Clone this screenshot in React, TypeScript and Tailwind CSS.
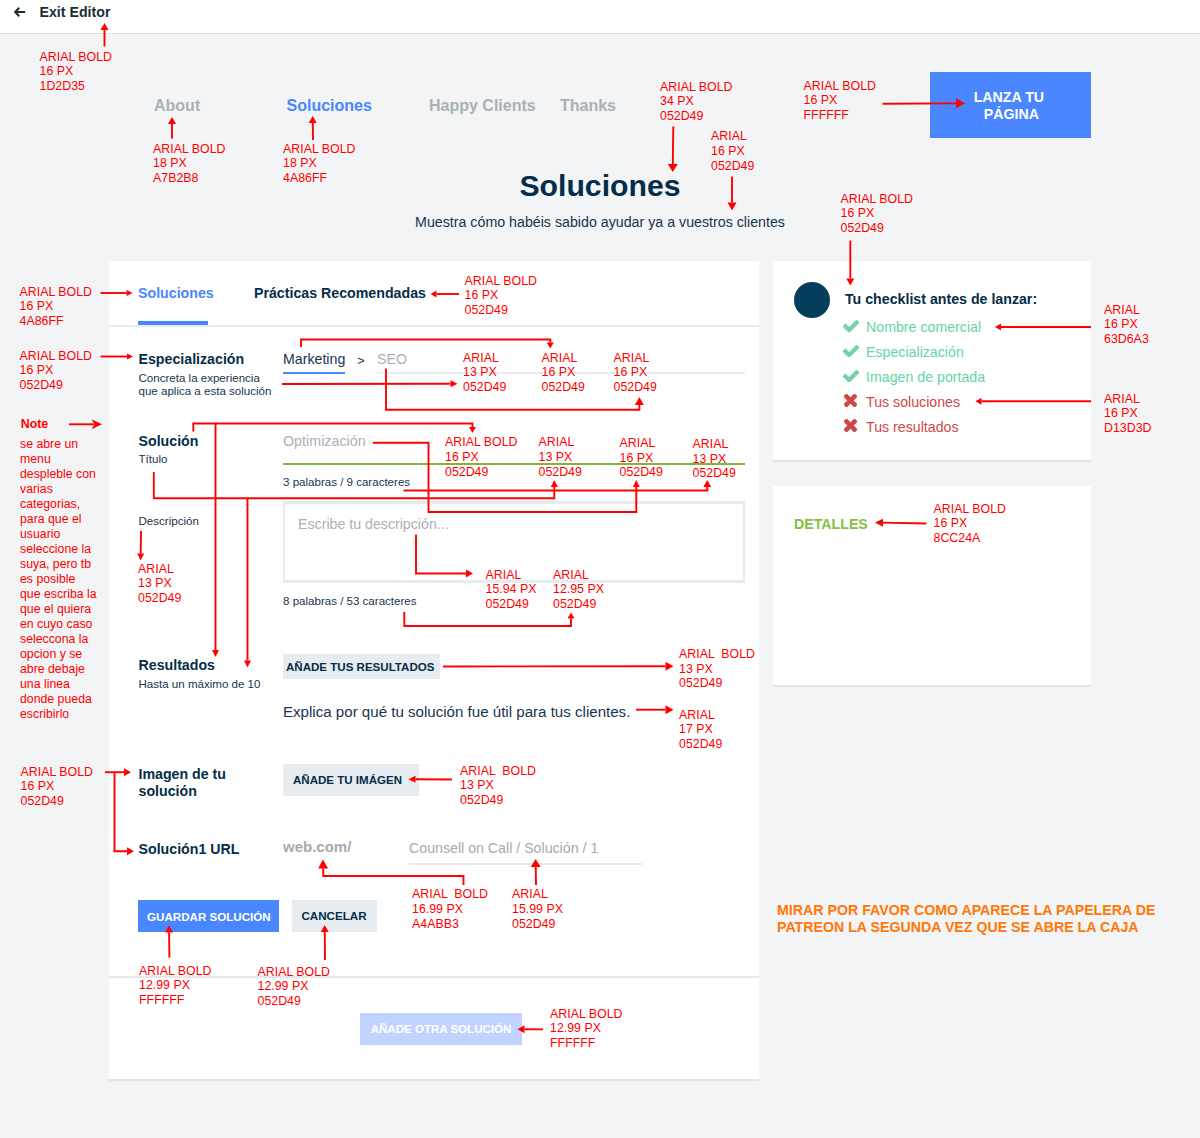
import React from "react";

type Point = [number, number];

const specs: { x: number; y: number; lines: [string, string, string] }[] = [
  { x: 39.5, y: 57, lines: ["ARIAL BOLD", "16 PX", "1D2D35"] },
  { x: 153, y: 149, lines: ["ARIAL BOLD", "18 PX", "A7B2B8"] },
  { x: 283, y: 149, lines: ["ARIAL BOLD", "18 PX", "4A86FF"] },
  { x: 660, y: 86.8, lines: ["ARIAL BOLD", "34 PX", "052D49"] },
  { x: 711, y: 136.5, lines: ["ARIAL", "16 PX", "052D49"] },
  { x: 803.5, y: 86, lines: ["ARIAL BOLD", "16 PX", "FFFFFF"] },
  { x: 840.5, y: 199, lines: ["ARIAL BOLD", "16 PX", "052D49"] },
  { x: 1104, y: 310, lines: ["ARIAL", "16 PX", "63D6A3"] },
  { x: 1104, y: 399, lines: ["ARIAL", "16 PX", "D13D3D"] },
  { x: 19.5, y: 292, lines: ["ARIAL BOLD", "16 PX", "4A86FF"] },
  { x: 19.5, y: 356, lines: ["ARIAL BOLD", "16 PX", "052D49"] },
  { x: 464.5, y: 281, lines: ["ARIAL BOLD", "16 PX", "052D49"] },
  { x: 463, y: 358, lines: ["ARIAL", "13 PX", "052D49"] },
  { x: 541.5, y: 358, lines: ["ARIAL", "16 PX", "052D49"] },
  { x: 613.5, y: 358, lines: ["ARIAL", "16 PX", "052D49"] },
  { x: 445, y: 442.5, lines: ["ARIAL BOLD", "16 PX", "052D49"] },
  { x: 538.5, y: 442.5, lines: ["ARIAL", "13 PX", "052D49"] },
  { x: 619.5, y: 443.3, lines: ["ARIAL", "16 PX", "052D49"] },
  { x: 692.5, y: 444.3, lines: ["ARIAL", "13 PX", "052D49"] },
  { x: 138, y: 569, lines: ["ARIAL", "13 PX", "052D49"] },
  { x: 485.5, y: 575, lines: ["ARIAL", "15.94 PX", "052D49"] },
  { x: 553, y: 575, lines: ["ARIAL", "12.95 PX", "052D49"] },
  { x: 679, y: 654.3, lines: ["ARIAL  BOLD", "13 PX", "052D49"] },
  { x: 679, y: 715, lines: ["ARIAL", "17 PX", "052D49"] },
  { x: 20.5, y: 772, lines: ["ARIAL BOLD", "16 PX", "052D49"] },
  { x: 460, y: 771, lines: ["ARIAL  BOLD", "13 PX", "052D49"] },
  { x: 412, y: 894.5, lines: ["ARIAL  BOLD", "16.99 PX", "A4ABB3"] },
  { x: 512, y: 894.5, lines: ["ARIAL", "15.99 PX", "052D49"] },
  { x: 139, y: 971, lines: ["ARIAL BOLD", "12.99 PX", "FFFFFF"] },
  { x: 257.5, y: 972, lines: ["ARIAL BOLD", "12.99 PX", "052D49"] },
  { x: 550, y: 1014, lines: ["ARIAL BOLD", "12.99 PX", "FFFFFF"] },
  { x: 933.5, y: 509, lines: ["ARIAL BOLD", "16 PX", "8CC24A"] },
];

/* Each connector is a polyline whose arrowhead sits on the last point. */
const connectors: { pts: Point[]; w: number; l: number }[] = [
  { pts: [[104.5, 46.5], [104.5, 23]], w: 8, l: 7 },
  { pts: [[172, 138.5], [172, 117]], w: 8, l: 7 },
  { pts: [[313, 140], [312.7, 116]], w: 8, l: 7 },
  { pts: [[673.3, 126.5], [672.7, 172]], w: 10, l: 8 },
  { pts: [[732, 176.5], [732, 210.5]], w: 9, l: 8 },
  { pts: [[882.5, 103.8], [965, 103.3]], w: 10, l: 9 },
  { pts: [[850.3, 240.5], [850.3, 285.5]], w: 8, l: 7 },
  { pts: [[1091, 327], [995, 327]], w: 7, l: 6 },
  { pts: [[1091, 401.3], [975.5, 401.3]], w: 7, l: 6 },
  { pts: [[100.5, 293], [132.5, 293]], w: 6, l: 6 },
  { pts: [[100.5, 356.5], [133, 356.5]], w: 6, l: 6 },
  { pts: [[459, 294], [430.5, 294]], w: 7, l: 6 },
  { pts: [[301, 347], [301, 339.5], [550.3, 339.5], [550.3, 348.5]], w: 7, l: 6 },
  { pts: [[282, 384], [457.5, 383.8]], w: 7, l: 7 },
  { pts: [[386, 368.5], [386, 409.7], [639.4, 409.7], [639.4, 397]], w: 9, l: 8 },
  { pts: [[193.3, 431.5], [193.3, 423.5], [472.5, 423.5], [472.5, 433]], w: 7, l: 6 },
  { pts: [[215.5, 423], [215.5, 657]], w: 7, l: 7 },
  { pts: [[153.8, 472], [153.8, 498.3], [554.3, 498.3], [554.3, 480]], w: 7, l: 7 },
  { pts: [[247.5, 498], [247.5, 667.5]], w: 7, l: 7 },
  { pts: [[373, 442.7], [428.5, 442.7], [428.5, 512], [636.3, 512], [636.3, 480]], w: 7, l: 7 },
  { pts: [[403.5, 490.5], [707.3, 490.5], [707.3, 480]], w: 8, l: 7 },
  { pts: [[141, 531], [140.6, 560.5]], w: 7, l: 7 },
  { pts: [[416, 534.5], [416, 573.5], [473, 573.5]], w: 8, l: 7 },
  { pts: [[404.3, 612], [404.3, 626], [571, 626], [571, 612.5]], w: 7, l: 6 },
  { pts: [[443, 666.5], [673.5, 666.2]], w: 9, l: 8 },
  { pts: [[636, 709.7], [673.5, 709.7]], w: 9, l: 8 },
  { pts: [[105, 772.2], [131, 772.2]], w: 8, l: 7 },
  { pts: [[114.5, 772], [114.5, 851.3], [134, 851.3]], w: 8, l: 7 },
  { pts: [[452, 779.5], [408.5, 779.2]], w: 7, l: 7 },
  { pts: [[463.5, 885], [463.5, 876], [323.3, 876], [323, 859.5]], w: 10, l: 9 },
  { pts: [[536, 885], [535.6, 859]], w: 10, l: 8 },
  { pts: [[169.4, 957.5], [169, 925.5]], w: 8, l: 7 },
  { pts: [[325, 960], [324.7, 925]], w: 8, l: 7 },
  { pts: [[543, 1029.4], [517.5, 1029.2]], w: 8, l: 7 },
  { pts: [[926.3, 523.5], [875, 522.5]], w: 8, l: 8 },
];

function Connector({ pts, w, l }: { pts: Point[]; w: number; l: number }) {
  const [tx, ty] = pts[pts.length - 1];
  const [px, py] = pts[pts.length - 2];
  const len = Math.hypot(tx - px, ty - py);
  const ux = (tx - px) / len;
  const uy = (ty - py) / len;
  const bx = tx - ux * l;
  const by = ty - uy * l;
  const h = w / 2;
  const line = [...pts.slice(0, -1), [bx, by]].map((p) => p.join(",")).join(" ");
  return (
    <>
      <polyline points={line} fill="none" stroke="#ff0000" strokeWidth={1.9} />
      <polygon
        points={`${tx},${ty} ${bx - uy * h},${by + ux * h} ${bx + uy * h},${by - ux * h}`}
        fill="#ff0000"
      />
    </>
  );
}

function Annotations() {
  return (
    <div className="pointer-events-none absolute inset-0 text-[#ff0000]">
      <svg className="absolute inset-0" width="1200" height="1138" viewBox="0 0 1200 1138">
        {connectors.map((c, i) => (
          <Connector key={i} {...c} />
        ))}
        <path d="M69 424.3H94" stroke="#ff0000" strokeWidth={1.9} />
        <path d="M102 424.3L91.5 419.3L94.5 424.3L91.5 429.3Z" fill="#ff0000" />
      </svg>
      {specs.map((s, i) => (
        <div
          key={i}
          className="absolute whitespace-pre text-[12.4px] leading-[14.7px]"
          style={{ left: s.x, top: s.y - 7.3 }}
        >
          {s.lines.map((t) => (
            <div key={t}>{t}</div>
          ))}
        </div>
      ))}
      <div className="absolute left-[20px] top-[416px] w-[86px]">
        <div className="ml-[0.7px] text-[12.4px] leading-[16px] font-bold">Note</div>
        <div className="mt-[5px] whitespace-pre text-[12.3px] leading-[15px]">
          {`se abre un
menu
despleble con
varias
categorias,
para que el
usuario
seleccione la
suya, pero tb
es posible
que escriba la
que el quiera
en cuyo caso
seleccona la
opcion y se
abre debaje
una linea
donde pueda
escribirlo`}
        </div>
      </div>
      <div className="absolute left-[777px] top-[902px] whitespace-pre text-[14.2px] leading-[17px] font-bold text-[#ff7808]">
        {"MIRAR POR FAVOR COMO APARECE LA PAPELERA DE\nPATREON LA SEGUNDA VEZ QUE SE ABRE LA CAJA"}
      </div>
    </div>
  );
}

function CheckIcon() {
  return (
    <svg className="h-[12.5px] w-[16px]" viewBox="121 334 1550 1188" fill="#74d4a4" stroke="#74d4a4" strokeWidth={50}>
      <path d="M1671 566q0 40-28 68l-724 724-136 136q-28 28-68 28t-68-28l-136-136-362-362q-28-28-28-68t28-68l136-136q28-28 68-28t68 28l294 295 656-657q28-28 68-28t68 28l136 136q28 28 28 68z" />
    </svg>
  );
}

function CrossIcon() {
  return (
    <svg className="mt-[-1px] ml-px h-[13px] w-[13px]" viewBox="302 366 1188 1188" fill="#d14747" stroke="#d14747" strokeWidth={50}>
      <path d="M1490 1322q0 40-28 68l-136 136q-28 28-68 28t-68-28l-294-294-294 294q-28 28-68 28t-68-28l-136-136q-28-28-28-68t28-68l294-294-294-294q-28-28-28-68t28-68l136-136q28-28 68-28t68 28l294 294 294-294q28-28 68-28t68 28l136 136q28 28 28 68t-28 68l-294 294 294 294q28 28 28 68z" />
    </svg>
  );
}

const checklist = [
  { label: "Nombre comercial", done: true },
  { label: "Especialización", done: true },
  { label: "Imagen de portada", done: true },
  { label: "Tus soluciones", done: false },
  { label: "Tus resultados", done: false },
];

function Row({ className, label, children }: { className: string; label: React.ReactNode; children?: React.ReactNode }) {
  return (
    <div className={`flex ${className}`}>
      <div className="w-[144.5px] shrink-0 whitespace-nowrap">{label}</div>
      <div className="w-[462px] shrink-0">{children}</div>
    </div>
  );
}

function Title({ children }: { children: React.ReactNode }) {
  return <div className="text-[14.2px] leading-[18px] font-bold text-[#052d49]">{children}</div>;
}

function MainCard() {
  return (
    <section className="h-[819.5px] w-[650px] border-b-2 border-[#dfe4e9] bg-white text-[#17354f]">
      <div className="flex h-[66px] items-start border-b-2 border-[#e6ebef] pl-[29px] text-[14.2px] font-bold text-[#052d49]">
        <div className="flex h-[64px] w-[70px] flex-col whitespace-nowrap border-b-4 border-[#4a86ff] pt-[23px] leading-[18px] text-[#4a86ff]">
          Soluciones
        </div>
        <div className="ml-[46px] pt-[23px] leading-[18px]">Prácticas Recomendadas</div>
      </div>

      <div className="pl-[29.5px] pt-[23px]">
        <Row
          className="h-[82px]"
          label={
            <>
              <Title>Especialización</Title>
              <div className="mt-[3.5px] text-[11.55px] leading-[13.5px]">
                Concreta la experiencia
                <br />
                que aplica a esta solución
              </div>
            </>
          }
        >
          <div className="flex text-[14.2px] leading-[18px]">
            <div className="h-[23.5px] w-[62px] whitespace-nowrap border-b-2 border-[#4a86ff]">Marketing</div>
            <div className="w-[32px] pl-[12px] pt-[2px] text-[13px]">&gt;</div>
            <div className="h-[23.5px] flex-1 border-b-2 border-[#e6ebef] text-[#a9b0b8]">SEO</div>
          </div>
        </Row>

        <Row
          className="h-[69px]"
          label={
            <>
              <Title>Solución</Title>
              <div className="mt-[2px] text-[11.55px] leading-[14px]">Título</div>
            </>
          }
        >
          <div className="h-[32.5px] border-b-2 border-[#7eb53c] text-[14.3px] leading-[18px] text-[#a9b0b8]">
            Optimización
          </div>
          <div className="mt-[10.5px] text-[11.55px] leading-[14px]">3 palabras / 9 caracteres</div>
        </Row>

        <Row className="h-[155px]" label={<div className="pt-[13px] text-[11.55px] leading-[14px]">Descripción</div>}>
          <div className="h-[82px] border-x-2 border-y-[3px] border-[#e6ebef] pt-[11px] pl-[13px] text-[14.2px] leading-[18px] text-[#a9b0b8]">
            Escribe tu descripción...
          </div>
          <div className="pt-[11px] text-[11.55px] leading-[14px]">8 palabras / 53 caracteres</div>
        </Row>

        <Row
          className="h-[109.5px]"
          label={
            <>
              <Title>Resultados</Title>
              <div className="mt-[3px] text-[11.55px] leading-[14px]">Hasta un máximo de 10</div>
            </>
          }
        >
          <button className="mt-[-2px] block h-[25px] w-[157px] whitespace-nowrap bg-[#e7ecf0] pl-[3px] text-left text-[11.55px] leading-[26px] font-bold text-[#052d49]">
            AÑADE TUS RESULTADOS
          </button>
          <div className="mt-[22.5px] text-[15.1px] leading-[20px]">Explica por qué tu solución fue útil para tus clientes.</div>
        </Row>

        <Row
          className="h-[74px]"
          label={
            <div className="text-[14.2px] leading-[17px] font-bold text-[#052d49]">
              Imagen de tu
              <br />
              solución
            </div>
          }
        >
          <button className="mt-[-2px] block h-[32px] w-[136px] whitespace-nowrap bg-[#e7ecf0] pl-[10px] text-left text-[11.55px] leading-[33px] font-bold text-[#052d49]">
            AÑADE TU IMÁGEN
          </button>
        </Row>

        <Row className="h-[60px]" label={<Title>Solución1 URL</Title>}>
          <div className="flex text-[14.2px] leading-[18px] text-[#a4abb3]">
            <div className="-mt-[1.5px] w-[126px] text-[15px] font-bold">web.com/</div>
            <div className="h-[25px] w-[233px] border-b-2 border-[#e6ebef] leading-[17px]">Counsell on Call / Solución / 1</div>
          </div>
        </Row>

        <div className="-ml-[0.5px] flex h-[76px] gap-[13.5px] whitespace-nowrap text-[11.6px] font-bold">
          <button className="h-[32px] w-[140.5px] bg-[#4a86ff] pl-[9px] text-left leading-[33px] text-white">GUARDAR SOLUCIÓN</button>
          <button className="h-[32px] w-[85px] bg-[#e7ecf0] pl-[9.5px] text-left leading-[32px] text-[#052d49]">CANCELAR</button>
        </div>
      </div>

      <div className="border-t-2 border-[#e4e9ed] pt-[35px] pl-[251px]">
        <button className="block h-[32px] w-[162px] whitespace-nowrap bg-[#c0d4ff] text-center text-[11.55px] leading-[33px] font-bold text-white">
          AÑADE OTRA SOLUCIÓN
        </button>
      </div>
    </section>
  );
}

export default function App() {
  return (
    <div className="relative h-[1138px] w-[1200px] overflow-hidden bg-[#f2f4f6] font-['Liberation_Sans',Arial,sans-serif] text-[#052d49]">
      <header className="flex h-[34px] items-start border-b border-[#dde1e5] bg-white pl-[14px] text-[14.2px] leading-[25px] font-bold text-[#1d2d35]">
        <svg className="mt-[7px] h-[10px] w-[12px]" viewBox="0 0 12 10" fill="none" stroke="#1d2d35" strokeWidth={2}>
          <path d="M5.2 0.8L1.2 5L5.2 9.2M1.5 5H11.2" />
        </svg>
        <span className="ml-[13.5px]">Exit Editor</span>
      </header>

      <div className="flex h-[104px] pt-[38px]">
        <nav className="flex w-[930.4px] shrink-0 pt-[24px] pl-[154px] text-[16px] leading-[20px] font-bold text-[#a7b2b8]">
          <span className="w-[132.5px]">About</span>
          <span className="w-[142.5px] text-[#4a86ff]">Soluciones</span>
          <span className="w-[131px]">Happy Clients</span>
          <span>Thanks</span>
        </nav>
        <button className="flex h-[66px] w-[161px] shrink-0 flex-col items-center justify-center bg-[#4a86ff] text-[14.2px] leading-[17px] font-bold text-white">
          <span className="mr-[4px] mt-px">LANZA TU</span>
          <span className="ml-[1px]">PÁGINA</span>
        </button>
      </div>

      <div className="h-[123px] pt-[28px] text-center">
        <h1 className="text-[30.2px] leading-[40px] font-bold">Soluciones</h1>
        <p className="mt-[5.5px] text-[14.23px] leading-[20px] text-[#17354f]">Muestra cómo habéis sabido ayudar ya a vuestros clientes</p>
      </div>

      <main className="flex items-start gap-[14px] pl-[109px]">
        <MainCard />
        <aside className="flex w-[318px] flex-col gap-[24px]">
          <section className="flex h-[201px] border-b-2 border-[#dfe4e9] bg-white pt-[21px] pl-[21px]">
            <div className="h-[36px] w-[36px] rounded-full bg-[#053d5c]" />
            <div className="ml-[13px] pt-[8px]">
              <div className="ml-[2px] text-[14.2px] leading-[18px] font-bold">Tu checklist antes de lanzar:</div>
              <ul className="mt-[7px] text-[14.2px] leading-[24.95px]">
                {checklist.map((item) => (
                  <li key={item.label} className={item.done ? "flex text-[#63d6a3]" : "flex text-[#d14747]"}>
                    <span className="w-[23px] pt-[5px]">{item.done ? <CheckIcon /> : <CrossIcon />}</span>
                    {item.label}
                  </li>
                ))}
              </ul>
            </div>
          </section>
          <section className="h-[201px] border-b-2 border-[#dfe4e9] bg-white pt-[29px] pl-[21px] text-[14.2px] leading-[18px] font-bold text-[#84c044]">
            DETALLES
          </section>
        </aside>
      </main>

      <Annotations />
    </div>
  );
}
